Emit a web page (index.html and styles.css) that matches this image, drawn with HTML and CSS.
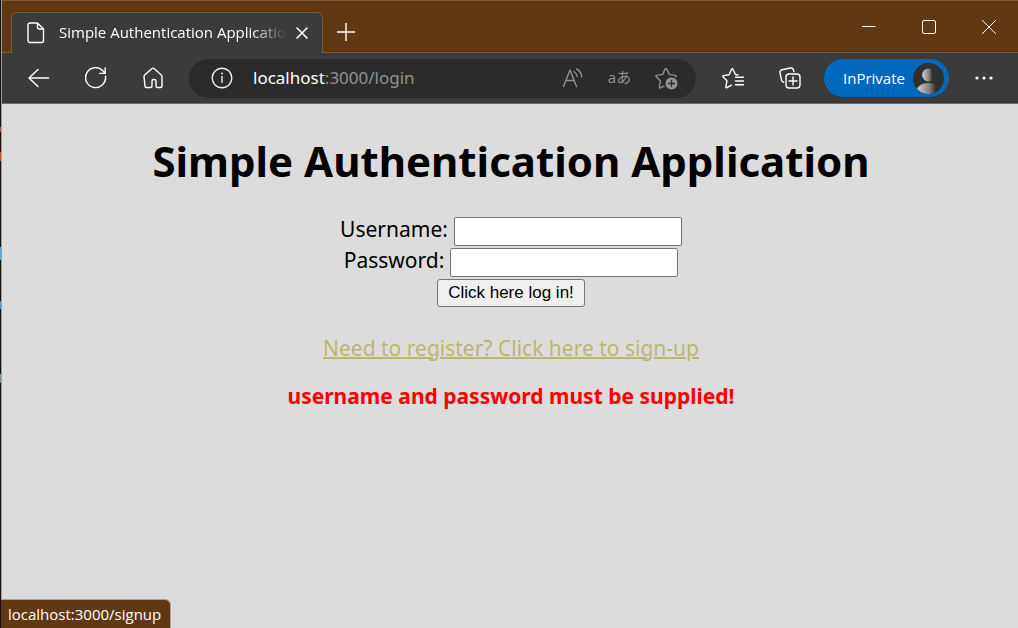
FILE: index.html
```html
<!DOCTYPE html>
<html lang="en">
<head>
<meta charset="utf-8">
<title>Simple Authentication Application</title>
<link rel="stylesheet" href="styles.css">
</head>
<body>
<div class="desktop-edge"></div>
<div class="window">
  <header class="titlebar">
    <div class="tab">
      <svg class="tab-icon" width="18" height="22" viewBox="0 0 18 22"><path d="M3 1h7.500l6 6v11.500a2 2 0 0 1-2 2H3a2 2 0 0 1-2-2V3a2 2 0 0 1 2-2zM10.500 1v4.500a1.500 1.500 0 0 0 1.500 1.500h4.500"/></svg>
      <span class="tab-title">Simple Authentication Application</span>
      <button class="tab-close" aria-label="Close tab"><svg width="12" height="12" viewBox="0 0 12 12"><path d="M1 1l10 10M11 1L1 11"/></svg></button>
    </div>
    <button class="new-tab" aria-label="New tab"><svg width="18" height="18" viewBox="0 0 18 18"><path d="M9 0v18M0 9h18"/></svg></button>
    <div class="window-controls">
      <button aria-label="Minimize"><svg width="14" height="14" viewBox="0 0 14 14"><path d="M0 6.500h13"/></svg></button>
      <button aria-label="Maximize"><svg width="14" height="14" viewBox="0 0 14 14"><rect x=".5" y=".5" width="13" height="13" rx="1.500"/></svg></button>
      <button aria-label="Close"><svg width="14" height="14" viewBox="0 0 14 14"><path d="M.5 .5l13 13M13.500 .5l-13 13"/></svg></button>
    </div>
  </header>

  <nav class="toolbar">
    <button class="tool" aria-label="Back"><svg width="22" height="20" viewBox="0 0 22 20"><path d="M20.500 10H1M10 1.500L1 10l9 8.500"/></svg></button>
    <button class="tool" aria-label="Refresh"><svg width="22" height="22" viewBox="0 0 22 22"><path d="M20.500 9.200A10 10 0 1 1 17.800 3.700l2.400 2.400M20.200 1v5.400h-5.400"/></svg></button>
    <button class="tool" aria-label="Home"><svg width="20" height="22" viewBox="0 0 20 22"><path d="M1 9.500a2 2 0 0 1 .7-1.500l7-6.300a2 2 0 0 1 2.600 0l7 6.300a2 2 0 0 1 .7 1.500v9.500a1.500 1.500 0 0 1-1.500 1.500h-3a1.500 1.500 0 0 1-1.500-1.500v-5a1.500 1.500 0 0 0-1.500-1.500h-1a1.500 1.500 0 0 0-1.500 1.500v5a1.500 1.500 0 0 1-1.500 1.500h-4a1.500 1.500 0 0 1-1.500-1.500z"/></svg></button>

    <div class="address">
      <svg width="22" height="22" viewBox="0 0 22 22"><circle cx="11" cy="11" r="9.800"/><path d="M11 9.500v6"/><circle class="solid" cx="11" cy="6.500" r="1"/></svg>
      <span class="url"><span class="host">localhost</span>:3000/login</span>
      <button class="address-tool" aria-label="Read aloud"><svg width="22" height="20" viewBox="0 0 22 20"><path d="M1.500 18.500L8 2l6.500 16.500M3.900 12.500h8.200M12 3.500c2 1.200 3 3 3.200 5M14.500 1c3.200 1.500 5 4.500 5.200 8"/></svg></button>
      <button class="address-tool translate" aria-label="Translate">aあ</button>
      <button class="address-tool" aria-label="Add to favorites"><svg width="24" height="23" viewBox="0 0 24 23"><path d="M9 19.200l-3.600 1.700c-.6.300-1.100-.1-1-.8l.9-6.300-4.200-4.200c-.4-.5-.2-1.100.4-1.200l6.200-1 2.500-5.500c.3-.7 1.100-.7 1.400 0l2.700 5.500 6 1c.8.200 1 .9.500 1.500"/><circle class="solid" cx="16.500" cy="16.500" r="6"/><path class="cutout" d="M16.500 13.500v6M13.500 16.500h6"/></svg></button>
    </div>

    <button class="tool" aria-label="Favorites"><svg width="22" height="22" viewBox="0 0 22 22"><path d="M9.500 18.200l-4.600 2.500c-.6.300-1.100-.1-1-.8l1-6.200L1 9.800c-.5-.5-.2-1.100.4-1.200l5.700-.9 2.500-5.500c.3-.7 1-.7 1.300 0l2.700 5.500h2.400M13.500 10.300h8M13.500 14h8M13.500 17.700h8"/></svg></button>
    <button class="tool" aria-label="Collections"><svg width="22" height="22" viewBox="0 0 22 22"><rect x="7" y="7" width="14" height="14" rx="3"/><path d="M14 10v8M10 14h8M4.800 15.200c-1.200-.2-2-1-2.300-2.200L1 5.800c-.3-1.500.5-2.700 2-3L11.500 1c1.500-.3 2.500.4 2.900 1.800l.4 1.800"/></svg></button>
    <button class="profile">InPrivate
      <svg width="31" height="31" viewBox="0 0 31 31"><defs><linearGradient id="shade"><stop offset=".15" stop-color="#bbb"/><stop offset=".5" stop-color="#888"/><stop offset=".8" stop-color="#30302f"/></linearGradient><clipPath id="disc"><circle cx="15.500" cy="15.500" r="15.500"/></clipPath></defs><circle class="avatar" cx="15.500" cy="15.500" r="15.500"/><g clip-path="url(#disc)" fill="url(#shade)"><circle class="person" cx="15.500" cy="12" r="6.500"/><path class="person" d="M3 31c0-7 4-11 12.500-11S28 24 28 31z"/></g></svg>
    </button>
    <button class="tool more" aria-label="Settings and more"><svg width="18" height="4" viewBox="0 0 18 4"><circle class="solid" cx="2" cy="2" r="1.600"/><circle class="solid" cx="9" cy="2" r="1.600"/><circle class="solid" cx="16" cy="2" r="1.600"/></svg></button>
  </nav>

  <main class="page">
    <h1>Simple Authentication Application</h1>
    <form class="login">
      <div class="field"><label for="username">Username:</label><input id="username" type="text"></div>
      <div class="field"><label for="password">Password:</label><input id="password" type="password"></div>
      <button class="submit" type="button">Click here log in!</button>
    </form>
    <a class="signup" href="#signup">Need to register? Click here to sign-up</a>
    <p class="error">username and password must be supplied!</p>
    <div class="status">localhost:3000/signup</div>
  </main>
</div>
</body>
</html>
```
FILE: styles.css
```css
* { box-sizing: border-box; }

body {
  display: flex;
  min-height: 100vh;
  margin: 0;
  background: #dcdcdc;
  color: #000;
  font-family: "Open Sans", "Noto Sans", sans-serif;
}

button {
  display: flex;
  align-items: center;
  justify-content: center;
  padding: 0;
  border: 0;
  background: none;
  color: #fff;
  font-family: inherit;
}

svg {
  flex: none;
  fill: none;
  stroke: currentColor;
  stroke-width: 1.4;
  stroke-linecap: round;
  stroke-linejoin: round;
}

.solid { fill: currentColor; stroke: none; }

.desktop-edge {
  flex: none;
  width: 2px;
  border-right: 1px solid #a49c98;
  background: linear-gradient(#15100f 127px, #a85b40 127px 132px, #15100f 132px 152px, #b9542f 152px 161px, #15100f 161px 247px, #55aadd 247px 260px, #15100f 260px 301px, #4a9cd4 301px 309px, #15100f 309px 374px, #6d9c8c 374px 383px, #15100f 383px);
}

.window {
  display: flex;
  flex: 1;
  flex-direction: column;
  min-width: 0;
}

.titlebar {
  display: flex;
  height: 53px;
  padding-left: 9px;
  border-top: 1px solid #7b5639;
  background: #603813;
  box-shadow: inset 0 -1px #80583a;
  color: #fff;
}

.tab {
  display: flex;
  align-items: center;
  width: 312px;
  margin-top: 11px;
  padding: 0 8px 0 15px;
  border: 1px solid #80583a;
  border-bottom: 0;
  border-radius: 6px 6px 0 0;
  background: #3b3b3b;
}

.tab-title {
  flex: 1;
  margin-left: 14px;
  padding-bottom: 2px;
  overflow: hidden;
  font-size: 15px;
  white-space: nowrap;
  -webkit-mask-image: linear-gradient(to right, #000 85%, transparent);
  mask-image: linear-gradient(to right, #000 85%, transparent);
}

.tab-close { width: 24px; height: 24px; margin-left: 4px; }
.tab-close svg { stroke-width: 1.6; }
.new-tab { width: 46px; margin-top: 10px; }
.window-controls { display: flex; margin: 0 -1px 0 auto; }
.window-controls button { width: 60px; }
.window-controls svg { stroke-width: 1; }

.toolbar {
  display: flex;
  align-items: center;
  height: 51px;
  padding: 0 6px 0 8px;
  border-bottom: 1px solid #696969;
  background: #3b3b3b;
}

.tool { flex: none; width: 57px; height: 38px; }

.address {
  display: flex;
  flex: 1;
  align-items: center;
  min-width: 0;
  height: 39px;
  margin: 0 8px;
  padding: 0 6px 0 22px;
  border-radius: 20px;
  background: #2b2b2b;
  color: #f0f0f0;
}

.url {
  flex: 1;
  margin-left: 20px;
  padding-bottom: 2px;
  color: #929292;
  font-family: "Noto Sans", sans-serif;
  font-size: 17px;
}

.host { color: #fff; }
.address-tool { width: 47px; color: #929292; }

.translate {
  padding-bottom: 2px;
  font-family: "Open Sans", "Noto Sans CJK JP", sans-serif;
  font-size: 15px;
  line-height: 20px;
}

.cutout { stroke: #2b2b2b; }

.profile {
  justify-content: space-between;
  width: 125px;
  height: 38px;
  margin: 0 6px;
  padding: 0 5px 0 19px;
  border-radius: 19px;
  background: #0069bd;
  font-size: 15px;
  line-height: 36px;
}

.avatar { fill: #30302f; stroke: none; }
.person { stroke: none; }

.page {
  position: relative;
  display: flex;
  flex: 1;
  flex-direction: column;
  align-items: center;
  padding-left: 2px;
  font-family: "Noto Sans", "Open Sans", sans-serif;
  font-size: 21px;
  line-height: 30px;
}

h1 {
  margin: 27px 0 26px;
  font-size: 42px;
  line-height: 60px;
  white-space: nowrap;
}

.login { display: flex; flex-direction: column; align-items: center; gap: 2px; }
.field { display: flex; gap: 6px; height: 29px; }
.field label { line-height: 25px; }

.field input {
  width: 228px;
  height: 29px;
  padding: 1px 2px;
  border: 1px solid #767676;
  border-radius: 2px;
  background: #fff;
  font-size: 17px;
}

.submit {
  width: 148px;
  height: 28px;
  border: 1px solid #767676;
  border-radius: 3px;
  background: #efefef;
  color: #000;
  font-family: "Liberation Sans", Arial, sans-serif;
  font-size: 17px;
}

.signup {
  margin-top: 26px;
  color: #bdb76b;
  text-decoration-thickness: 2px;
}

.error { margin: 18px 0; color: #f00; font-weight: 700; }

.status {
  position: absolute;
  bottom: 0;
  left: -1px;
  padding: 1px 9px 1px 7px;
  border-top: 1px solid #a7a29b;
  border-right: 1px solid #a7a29b;
  border-radius: 0 6px 0 0;
  background: #603813;
  color: #fff;
  font-family: "Open Sans", "Noto Sans", sans-serif;
  font-size: 15px;
  line-height: 26px;
}
```
